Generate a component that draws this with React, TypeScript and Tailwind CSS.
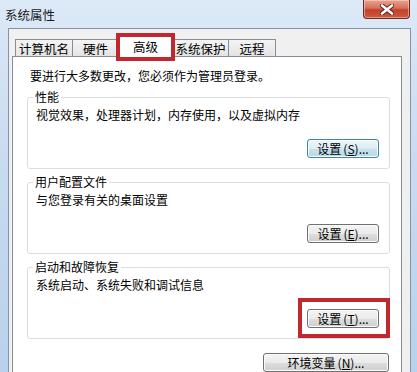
import React from "react";

const font = "font-['Noto_Sans_CJK_SC','Noto_Sans',sans-serif]";

function WinButton({
  children,
  width = "w-[72px]",
  focused = false,
}: {
  children: React.ReactNode;
  width?: string;
  focused?: boolean;
}) {
  return (
    <button
      className={
        "h-[19px] rounded-[3px] border text-[12px] leading-[16px] text-black shadow-[inset_0_0_0_1px_#fbfbfb] flex items-center justify-center " +
        width +
        (focused
          ? " border-[#3c86a8] bg-[linear-gradient(to_bottom,#eef6fa_0%,#dcecf4_50%,#c8e1ee_51%,#b9d8e8_100%)]"
          : " border-[#707070] bg-[linear-gradient(to_bottom,#f4f4f4_0%,#ebebeb_50%,#dedede_51%,#cfcfcf_100%)]")
      }
    >
      {children}
    </button>
  );
}

function Group({
  title,
  desc,
  children,
}: {
  title: string;
  desc: string;
  children: React.ReactNode;
}) {
  return (
    <fieldset className="mt-[5px] ml-[14px] mr-[11px] rounded-[3px] border border-[#d5dfe5] pl-[8px] pr-[10px] pb-[10px]">
      <legend className="ml-[-3px] px-[2px] text-[12px] leading-[16px] text-black">
        {title}
      </legend>
      <div className="mt-[2px] text-[12px] leading-[16px] text-black">{desc}</div>
      <div className="mt-[16px] flex justify-end">{children}</div>
    </fieldset>
  );
}

const tabs = [
  { label: "计算机名", w: "w-[58px]" },
  { label: "硬件", w: "w-[47px]" },
  { label: "高级", w: "w-[55px]", active: true },
  { label: "系统保护", w: "w-[57px]" },
  { label: "远程", w: "w-[48px]" },
];

export default function App() {
  return (
    <div
      className={
        "w-[417px] h-[372px] overflow-hidden flex flex-col bg-[linear-gradient(to_bottom,#dce9f7,#c9dcf1_40%,#b9d1ec)] " +
        font
      }
    >
      {/* title bar */}
      <div className="h-[28px] flex items-start shrink-0">
        <span className="pl-[5px] pt-[6px] text-[12.5px] leading-[18px] text-[#1b1b1b]">
          系统属性
        </span>
        <div className="ml-auto mr-[7px] w-[47px] h-[19px] rounded-b-[4px] border border-t-0 border-[#6b2a20] bg-[linear-gradient(to_bottom,#e9a592_0%,#d4705a_45%,#c2412b_55%,#d0583f_100%)] shadow-[inset_0_0_0_1px_rgba(255,220,210,0.5)] flex items-center justify-center">
          <svg width="14" height="11" viewBox="0 0 14 11">
            <path d="M2 1.5 L12 9.5 M12 1.5 L2 9.5" stroke="#5a1d14" strokeWidth="4.4" strokeLinecap="round" />
            <path d="M2 1.5 L12 9.5 M12 1.5 L2 9.5" stroke="#ffffff" strokeWidth="2.6" strokeLinecap="round" />
          </svg>
        </div>
      </div>

      {/* client area */}
      <div className="flex-1 ml-[8px] mr-[6px] border border-[#8394a8] bg-[#f0f0f0] pl-[3px] pr-[8px] pt-[6px] flex flex-col">
        {/* tabs */}
        <div className="flex items-end pl-[3px] h-[21px] relative z-10">
          {tabs.map((t, i) =>
            t.active ? (
              <div
                key={t.label}
                className={
                  "relative -ml-[1px] -mb-[1px] h-[22px] border border-b-0 border-[#898c95] bg-white text-[12.5px] leading-[16px] text-black flex items-start justify-center pt-[3px] " +
                  t.w
                }
              >
                {t.label}
                <div className="pointer-events-none absolute -left-[3px] -right-[3px] -top-[3px] -bottom-[4px] border-[4px] border-[#c1272d]" />
              </div>
            ) : (
              <div
                key={t.label}
                className={
                  "h-[17px] border border-b-0 border-[#898c95] bg-[linear-gradient(to_bottom,#f4f4f4,#e4e4e4)] text-[12.5px] leading-[16px] text-black flex items-start justify-center pt-[1px] " +
                  t.w +
                  (i > 0 ? " -ml-[1px]" : "")
                }
              >
                {t.label}
              </div>
            )
          )}
        </div>

        {/* panel */}
        <div className="flex-1 border border-[#898c95] bg-white flex flex-col">
          <div className="pt-[11px] pl-[17px] text-[12px] leading-[16px] text-black">
            要进行大多数更改，您必须作为管理员登录。
          </div>

          <Group title="性能" desc="视觉效果，处理器计划，内存使用，以及虚拟内存">
            <WinButton focused>
              设置<span className="ml-[2px]">(<u>S</u>)</span>...
            </WinButton>
          </Group>

          <Group title="用户配置文件" desc="与您登录有关的桌面设置">
            <WinButton>
              设置<span className="ml-[2px]">(<u>E</u>)</span>...
            </WinButton>
          </Group>

          <Group title="启动和故障恢复" desc="系统启动、系统失败和调试信息">
            <div className="relative">
              <WinButton>
                设置<span className="ml-[2px]">(<u>T</u>)</span>...
              </WinButton>
              <div className="pointer-events-none absolute -left-[9px] -right-[11px] -top-[11px] -bottom-[10px] border-[4px] border-[#c1272d]" />
            </div>
          </Group>

          <div className="mt-[14px] mr-[12px] flex justify-end">
            <WinButton width="w-[126px]">
              环境变量<span className="ml-[2px]">(<u>N</u>)</span>...
            </WinButton>
          </div>
        </div>
      </div>
    </div>
  );
}
